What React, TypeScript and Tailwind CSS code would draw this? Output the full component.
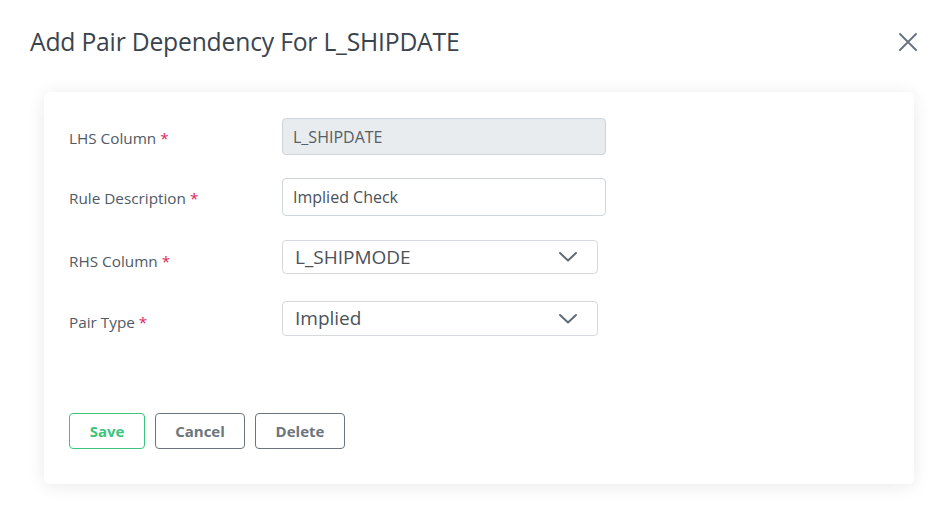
import React from "react";

function Chevron() {
  return (
    <svg width="20" height="12" viewBox="0 0 20 12" fill="none">
      <path d="M2 2 L10 9.5 L18 2" stroke="#5f6b76" strokeWidth="2" strokeLinecap="round" strokeLinejoin="round" />
    </svg>
  );
}

function Label({ text, offset }: { text: string; offset: string }) {
  return (
    <div className={"w-[213px] shrink-0 text-[15.3px] text-[#4f5a65] " + offset}>
      {text} <span className="text-[#e0245e]">*</span>
    </div>
  );
}

export default function App() {
  return (
    <div className="w-[947px] h-[508px] bg-white overflow-hidden relative" style={{ fontFamily: '"Open Sans", "Noto Sans", sans-serif' }}>
      <div className="flex items-start justify-between pl-[30px] pr-[28px] pt-[25px]">
        <h1 className="text-[24.7px] leading-[34px] text-[#3a444e] font-medium tracking-[-0.2px]">Add Pair Dependency For L_SHIPDATE</h1>
        <button className="mt-[6px] text-[#6b7580]">
          <svg width="22" height="22" viewBox="0 0 22 22" fill="none">
            <path d="M3 3 L19 19 M19 3 L3 19" stroke="#6b7580" strokeWidth="2" strokeLinecap="round" />
          </svg>
        </button>
      </div>
      <div className="ml-[44px] mt-[33px] w-[870px] h-[392px] bg-white rounded-[6px] shadow-[0_2px_18px_rgba(0,0,0,0.09)] pl-[25px] pt-[26px]">
        <div className="flex items-center h-[37px]">
          <Label text="LHS Column" offset="pt-[3px]" />
          <div className="w-[324px] h-[37px] rounded-[4px] border border-[#ced4da] bg-[#e9ecef] px-[10px] flex items-center text-[16px] text-[#555d66]">L_SHIPDATE</div>
        </div>
        <div className="flex items-center h-[38px] mt-[23px]">
          <Label text="Rule Description" offset="pt-[3px]" />
          <div className="w-[324px] h-[38px] rounded-[4px] border border-[#ced4da] bg-white px-[10px] flex items-center text-[16px] text-[#495057]">Implied Check</div>
        </div>
        <div className="flex items-center h-[34px] mt-[24px]">
          <Label text="RHS Column" offset="pt-[8px]" />
          <div className="w-[316px] h-[34px] rounded-[4px] border border-[#d5d9dd] bg-white pl-[12px] pr-[19px] flex items-center justify-between text-[19px] text-[#4a525a]">
            <span>L_SHIPMODE</span>
            <Chevron />
          </div>
        </div>
        <div className="flex items-center h-[35px] mt-[27px]">
          <Label text="Pair Type" offset="pt-[8px]" />
          <div className="w-[316px] h-[35px] rounded-[4px] border border-[#d5d9dd] bg-white pl-[12px] pr-[19px] flex items-center justify-between text-[19px] text-[#4a525a]">
            <span>Implied</span>
            <Chevron />
          </div>
        </div>
        <div className="flex gap-[10px] mt-[77px]">
          <button className="w-[76px] h-[36px] rounded-[4px] border border-[#3cc47c] text-[#3cc47c] text-[15px] font-bold">Save</button>
          <button className="w-[90px] h-[36px] rounded-[4px] border border-[#6c757d] text-[#6c757d] text-[15px] font-bold">Cancel</button>
          <button className="w-[90px] h-[36px] rounded-[4px] border border-[#6c757d] text-[#6c757d] text-[15px] font-bold">Delete</button>
        </div>
      </div>
    </div>
  );
}
